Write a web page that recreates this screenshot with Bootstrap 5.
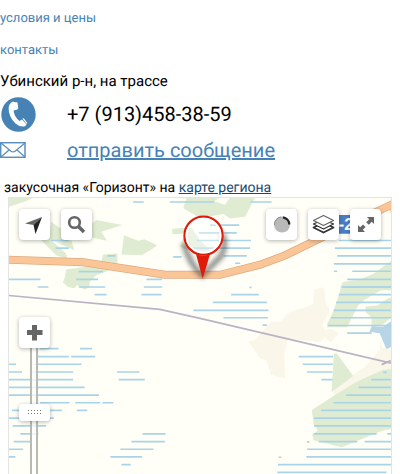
<!DOCTYPE html>
<html lang="ru">
<head>
<meta charset="utf-8">
<meta name="viewport" content="width=device-width, initial-scale=1">
<title>Закусочная «Горизонт»</title>
<link href="https://cdn.jsdelivr.net/npm/bootstrap@5.3.0/dist/css/bootstrap.min.css" rel="stylesheet">
<style>
body{font-family:Roboto,"Liberation Sans",sans-serif;color:#000;background:#fff;font-size:16px;line-height:20px;text-rendering:geometricPrecision}
a{color:#4682b4}
.menu-link{font-size:13px;line-height:16px;padding-top:11px}
.address{font-size:15px;padding-top:12px}
.contact-row{padding-top:4px}
.contact-icon{width:67px}
.contact-text{font-size:20px;line-height:26px}
.place{font-size:14px;line-height:18px;padding-top:16px}
.place a{color:#1a4a70}
.map-box{border:1px solid #e4e4e4;border-bottom:0;background:#fffff8;min-height:276px}
.map-btn{width:31px;height:31px;background:#fff;border:0;border-radius:4px;box-shadow:0 1px 4px rgba(0,0,0,.3)}
.map-tools{padding:11px 10px}
.tool-group{display:flex;gap:11px}
.map-zoom{top:119px;left:10px;width:31px;bottom:0}
.zoom-range{appearance:none;-webkit-appearance:none;position:absolute;top:31px;left:31px;width:250px;height:31px;margin:0;background:none;transform-origin:0 0;transform:rotate(90deg)}
.zoom-range::-webkit-slider-runnable-track{height:8px;background:rgba(255,255,255,.75);border:solid #b9b9b4;border-width:2px 0}
.zoom-range::-webkit-slider-thumb{-webkit-appearance:none;box-sizing:border-box;width:17px;height:31px;margin-top:-14px;border-radius:4px;padding:9px 6px;background:conic-gradient(from 270deg at 1px 1px,#777 90deg,transparent 0) 0 0/3px 3px content-box content-box,linear-gradient(#fff,#fff);box-shadow:1px 0 4px rgba(0,0,0,.3)}
</style>
</head>
<body class="d-flex flex-column min-vh-100">
<nav class="d-flex flex-column align-items-start gap-3 menu-link">
<a class="text-decoration-none" href="#prices">условия и цены</a>
<a class="text-decoration-none" href="#contacts">контакты</a>
</nav>
<main class="d-flex flex-column flex-grow-1">
<div class="address">Убинский р-н, на трассе</div>
<div class="contact-row d-flex align-items-center">
<div class="contact-icon"><svg class="d-block" width="36" height="38" viewBox="0 0 36 38" aria-hidden="true"><circle cx="18.500" cy="19.500" r="17.200" fill="#4682b4"/><path d="M13 6.500Q9 8 8.600 13Q8.500 22 15.500 28.500Q20 32.500 25 31.300L26.500 29.500L22 24.500L19.500 26Q14 21.500 13.600 15.500L17.500 14.500L17 8Z" fill="#fff"/><path d="M15.500 7l2 .500.800 6-2 .800zM22.500 23.700l1.200-.500 3.500 4.500-.600 1.200z" fill="#fff"/></svg></div>
<div class="contact-text">+7 (913)458-38-59</div>
</div>
<div class="contact-row d-flex align-items-center">
<div class="contact-icon"><svg class="d-block" width="26" height="16" viewBox="0 0 26 16" aria-hidden="true"><g fill="none" stroke="#5b8fbd" stroke-width="1.300"><rect x=".7" y=".7" width="24.300" height="14.600" stroke-width="1.500"/><path d="M1 1L11 9.300Q13 10.600 15 9.300L25 1M1 15L9 8M25 15L17 8"/></g></svg></div>
<a class="contact-text" href="#message">отправить сообщение</a>
</div>
<div class="place ps-1">закусочная «Горизонт» на <a href="#map">карте региона</a></div>
<section id="map" class="map-box position-relative overflow-hidden mx-2 flex-grow-1" aria-label="Карта">
<svg class="position-absolute top-0 start-0 w-100 h-100" viewBox="9 198 382 275" preserveAspectRatio="xMidYMin slice" aria-hidden="true">
<defs><filter id="soft" x="-50%" y="-50%" width="200%" height="200%"><feGaussianBlur stdDeviation="2"/></filter></defs>
<g transform="translate(0 190) scale(.33333)">
<g fill="#e0ecd2">
<path d="M22 22H105L75 35L30 50L22 45ZM100 122L145 122L160 155L200 190L203 207L170 195L140 165ZM155 95L190 120L200 130H240L290 90L368 105L305 125L322 152L275 142L250 150L215 150L225 180L190 165L150 145ZM373 135L415 152L435 147L472 165L455 178L425 195L365 193ZM310 193L353 190L353 220L305 213ZM200 238L250 230L305 215L330 240L290 255L270 275V290L255 298L232 284L225 294L205 290L190 275L195 265ZM560 22H765L735 80L690 85L670 72L600 84L550 55ZM517 116L575 112L600 150L640 190L600 195L565 180L540 170L555 130L517 132Z"/>
<path d="M1020 290L1025 279L1065 273L1120 250L1177 207V300H1020Z"/>
</g>
<path d="M642 34L660 22H690L675 44Z" fill="#fffff8"/>
</g>
<g transform="translate(200 280) scale(.33333)">
<path d="M340 28L370 20L375 65L388 90L365 135L375 150L395 145L415 160L390 185L372 170L360 185L262 175L252 220L254 294L212 282L198 238L182 235L144 183L165 178L212 123L242 125L262 98L338 72ZM440 295L492 260L538 207V178L545 202L577 200V262L540 270L470 300L410 347L395 335Z" fill="#faf6e9"/>
<path d="M427 5L460 0H577V28L560 25L540 30L490 60L473 75L455 110L440 140H380V130L395 100L410 60ZM495 78L530 75L560 55L577 50V105L550 130L512 142L513 112L495 95ZM400 220L408 217L458 286L393 335ZM400 345L470 302L545 268L577 264V443L545 450L424 499L340 478L335 460L352 450L340 430L334 388Z" fill="#e0ecd2"/>
<path d="M577 118V197L557 205L537 158L506 154L514 137L548 139Z" fill="#b8d5e7"/>
</g>
<path transform="translate(0 190) scale(.33333)" stroke="#a9d3e8" stroke-width="5" d="M400 36H432M510 36H642M750 36H814M22 60h5M155 151H207M168 174H208M323 197H347M237 244H310M22 267H123M230 267H295M440 267H487M115 290H147M238 290H317M432 290H487M630 105H717M597 128H710M590 151H752M575 174H750M670 197H740M520 200H545M705 219H720M1015 151H1177M1003 174H1177M1010 197H1177M1000 221H1177M1000 243H1010M1055 243H1177M1040 267H1177M1030 290H1177"/>
<path transform="translate(0 280) scale(.33333)" stroke="#a9d3e8" stroke-width="5" d="M285 43H321M425 43H485M580 90H600M120 204H177M241 204H277M112 228H208M215 228H287M25 251H50M103 251H246M22 274H68M92 274H221M352 274H419M22 297H221M357 297H435M22 320H255M22 343H298M122 366H210M227 366H302M308 366H341M38 389H187M232 389H263M25 412H163M40 435H140M428 459H497M63 459H117M395 482H495M43 482H95M22 505H71M362 505H461M22 528H48M332 528H427M365 551H393"/>
<path transform="translate(200 280) scale(.33333)" stroke="#a9d3e8" stroke-width="5" d="M148 21h6M93 43H176M38 66H200M0 90H205M70 112H203M187 134H200M423 20H577M415 43H577M407 66H577M400 90H577M392 112H577M383 135H577M440 158H513M295 228H398M307 251H397M320 274H396M363 297H396M548 275h10M512 297H577M474 320H577M437 343H577M399 366H577M362 389H577M341 412H577M341 435H577M340 459H528M560 459H577M320 483h7M355 482H470M492 482H577M320 505H577M318 528H577M235 529h8M233 551H573M231 574H557"/>
<path d="M8 295L160 309L200 318L392 363M381 364L390 360" fill="none" stroke="#b9b3c4" stroke-width="1.700"/>
<path d="M389 208L393 219" stroke="#f9dbb6" stroke-width="2"/>
<path d="M6 259.500L84 262L165 274.500H220L260 264.500L285 255L318 239L392 204L398 201" fill="none" stroke="#dfa982" stroke-width="8"/>
<path d="M6 259.500L84 262L165 274.500H220L260 264.500L285 255L318 239L392 204L398 201" fill="none" stroke="#fbc697" stroke-width="6.500"/>
<rect x="330" y="215" width="30" height="18.500" rx="1" fill="#4a7dc5"/>
<text x="338" y="230" font-family="Liberation Sans,sans-serif" font-weight="700" font-size="17" fill="#fff">-2</text>
<path d="M184 243Q189 263 202 275L221 256Q227 244 222 234" fill="none" stroke="#333" stroke-opacity=".5" stroke-width="6" filter="url(#soft)"/>
<circle cx="203.500" cy="235.500" r="19" fill="#fff" fill-opacity=".4" stroke="#df1c0b" stroke-width="2.200"/>
<circle cx="203.500" cy="235.500" r="17" fill="none" stroke="#fff" stroke-width="1.800"/>
<path d="M196 254Q203 256.500 210 254L202.700 278.500Z" fill="#df1c0b"/>
</svg>
<div class="map-tools position-absolute top-0 start-0 w-100 d-flex justify-content-between">
<div class="tool-group">
<button class="map-btn p-0" type="button" aria-label="Моё местоположение"><svg class="d-block" width="31" height="31" viewBox="0 0 31 31"><path d="M23 8L6 14.500L14.500 16Z" fill="#666"/><path d="M23 8L14.500 16L16.500 25Z" fill="#222"/></svg></button>
<button class="map-btn p-0" type="button" aria-label="Поиск"><svg class="d-block" width="31" height="31" viewBox="0 0 31 31" fill="none" stroke="#666"><circle cx="13.500" cy="13.500" r="5.300" stroke-width="2.600"/><path d="M17.500 17.500L23 23" stroke-width="3.600"/></svg></button>
</div>
<div class="tool-group">
<button class="map-btn p-0" type="button" aria-label="Пробки"><svg class="d-block" width="31" height="31" viewBox="0 0 31 31"><circle cx="16" cy="15.500" r="8" fill="#b9b9b9"/><path d="M17 8.300A7.500 7.500 0 0 1 23.300 15.500" fill="none" stroke="#222" stroke-width="2.200"/><path d="M8.500 16A7.500 7.500 0 0 1 15 8" fill="none" stroke="#8c8c8c"/></svg></button>
<button class="map-btn p-0" type="button" aria-label="Слои"><svg class="d-block" width="31" height="31" viewBox="0 0 31 31" fill="#fff" stroke="#333" stroke-width="1.300" stroke-linejoin="round"><path d="M15.500 13.500L25.500 18.500L15.500 23.500L5.500 18.500Z" stroke-width="1.800"/><path d="M15.500 10.500L25.500 15L15.500 20L5.500 15Z"/><path d="M15.500 6.500L25.500 11.500L15.500 16.500L5.500 11.500Z" stroke="#666"/></svg></button>
<button class="map-btn p-0" type="button" aria-label="На весь экран"><svg class="d-block" width="31" height="31" viewBox="0 0 31 31"><path d="M17 8H24V15L21.800 12.800L18.800 15.800L16.200 13.200L19.200 10.200ZM8 16L10.200 18.200L13 15.400L15.600 18L12.800 20.800L15 23H8Z" fill="#666"/></svg></button>
</div>
</div>
<div class="map-zoom position-absolute">
<input class="zoom-range" type="range" min="0" max="100" value="24" aria-label="Масштаб">
<button class="map-btn d-block p-0 position-relative" type="button" aria-label="Приблизить"><svg class="d-block" width="31" height="31" viewBox="0 0 31 31"><path d="M13 8H18V13H23.500V18H18V23.500H13V18H8V13H13Z" fill="#666"/></svg></button>
</div>
</section>
</main>
<script src="https://cdn.jsdelivr.net/npm/bootstrap@5.3.0/dist/js/bootstrap.bundle.min.js"></script>
</body>
</html>
